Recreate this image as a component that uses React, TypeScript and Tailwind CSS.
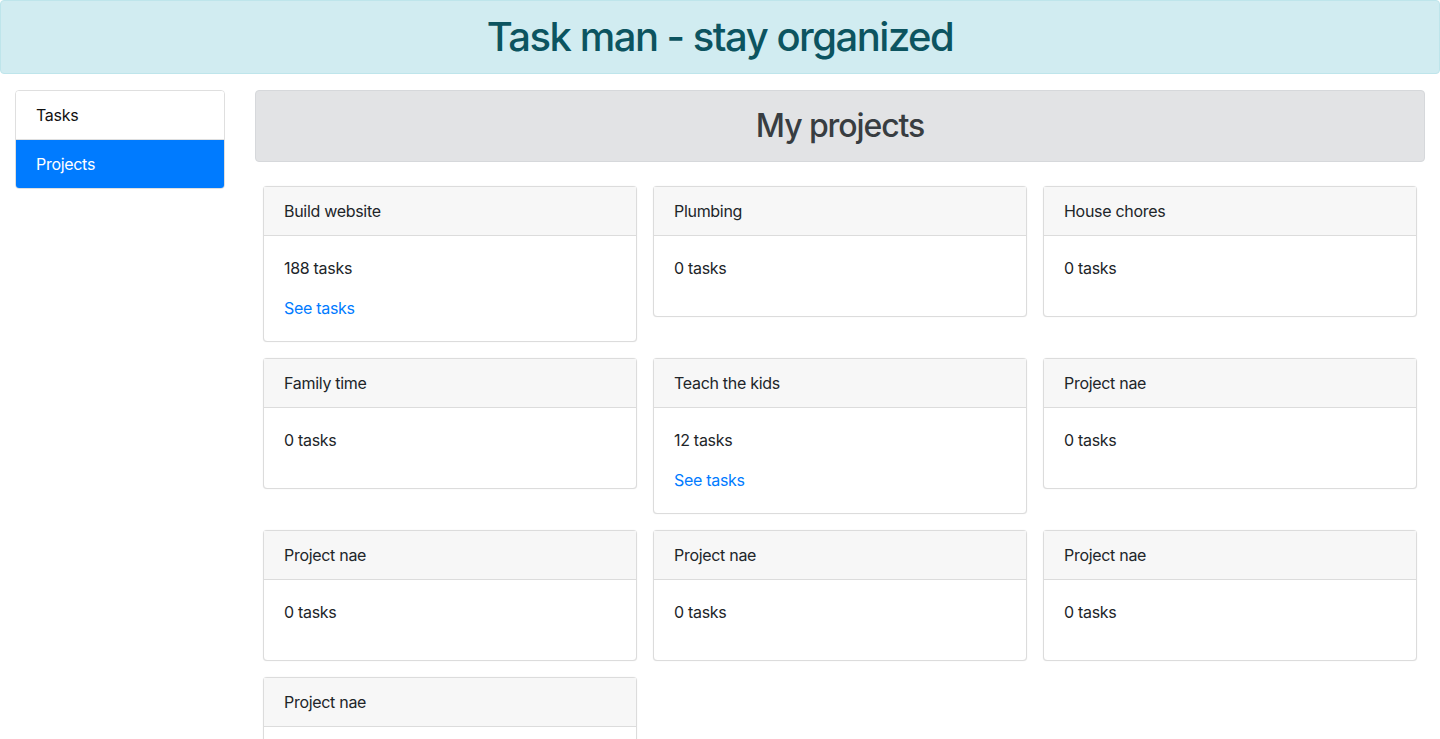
const projects = [
  { name: "Build website", count: 188 },
  { name: "Plumbing", count: 0 },
  { name: "House chores", count: 0 },
  { name: "Family time", count: 0 },
  { name: "Teach the kids", count: 12 },
  { name: "Project nae", count: 0 },
  { name: "Project nae", count: 0 },
  { name: "Project nae", count: 0 },
  { name: "Project nae", count: 0 },
  { name: "Project nae", count: 0 },
];

function ProjectCard({ name, count }: { name: string; count: number }) {
  return (
    <div className="m-2 flex flex-col rounded border border-[#dcdcdc] bg-white shadow-[0_0_1px_rgba(0,0,0,0.15)]">
      <div className="border-b border-[#dcdcdc] bg-[#f7f7f7] px-5 py-3 leading-6">{name}</div>
      <div className="p-5 leading-6">
        <p className="mb-4">{count} tasks</p>
        {count > 0 ? (
          <a href="#" className="block pb-px text-[#007bff]">
            See tasks
          </a>
        ) : null}
      </div>
    </div>
  );
}

export default function App() {
  return (
    <div className="min-h-screen bg-white text-base tracking-[-0.3px] text-[#212529] [font-family:Inter,'Liberation_Sans',sans-serif]">
      <div className="mb-4 rounded border border-[#bee5eb] bg-[#d1ecf1] px-5 py-3 text-center">
        <h1 className="text-[40px] font-medium leading-[48px] tracking-[-1.5px] text-[#0c5460]">
          Task man - stay organized
        </h1>
      </div>
      <div className="flex">
        <div className="w-[240px] shrink-0 px-[15px]">
          <div className="overflow-hidden rounded border border-[#dfdfdf]">
            <div className="border-b border-[#dfdfdf] bg-white px-5 py-3 leading-6 text-[#111]">Tasks</div>
            <div className="bg-[#007bff] px-5 py-3 leading-6 text-white">Projects</div>
          </div>
        </div>
        <div className="flex-1 px-[15px]">
          <div className="mb-4 rounded border border-[#d6d8db] bg-[#e2e3e5] px-5 py-4 text-center">
            <h2 className="text-[32px] font-medium leading-[38px] tracking-[-1.1px] text-[#383d41]">My projects</h2>
          </div>
          <div className="grid grid-cols-3 items-start">
            {projects.map((p, i) => (
              <ProjectCard key={i} name={p.name} count={p.count} />
            ))}
          </div>
        </div>
      </div>
    </div>
  );
}
